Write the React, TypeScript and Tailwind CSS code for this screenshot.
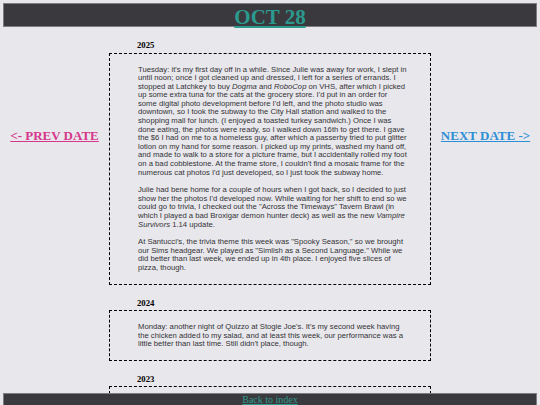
import React from "react"

type Entry = {
  year: string
  body: React.ReactNode[]
}

const entries: Entry[] = [
  {
    year: "2025",
    body: [
      <>
        Tuesday: it's my first day off in a while. Since Julie was away for work, I slept in until
        noon; once I got cleaned up and dressed, I left for a series of errands. I stopped at
        Latchkey to buy <i>Dogma</i> and <i>RoboCop</i> on VHS, after which I picked up some extra
        tuna for the cats at the grocery store. I'd put in an order for some digital photo
        development before I'd left, and the photo studio was downtown, so I took the subway to the
        City Hall station and walked to the shopping mall for lunch. (I enjoyed a toasted turkey
        sandwich.) Once I was done eating, the photos were ready, so I walked down 16th to get
        there. I gave the $6 I had on me to a homeless guy, after which a passerby tried to put
        glitter lotion on my hand for some reason. I picked up my prints, washed my hand off, and
        made to walk to a store for a picture frame, but I accidentally rolled my foot on a bad
        cobblestone. At the frame store, I couldn't find a mosaic frame for the numerous cat photos
        I'd just developed, so I just took the subway home.
      </>,
      <>
        Julie had bene home for a couple of hours when I got back, so I decided to just show her the
        photos I'd developed now. While waiting for her shift to end so we could go to trivia, I
        checked out the "Across the Timeways" Tavern Brawl (in which I played a bad Broxigar demon
        hunter deck) as well as the new <i>Vampire Survivors</i> 1.14 update.
      </>,
      <>
        At Santucci's, the trivia theme this week was "Spooky Season," so we brought our Sims
        headgear. We played as "Simlish as a Second Language." While we did better than last week,
        we ended up in 4th place. I enjoyed five slices of pizza, though.
      </>,
    ],
  },
  {
    year: "2024",
    body: [
      <>
        Monday: another night of Quizzo at Stogie Joe's. It's my second week having the chicken
        added to my salad, and at least this week, our performance was a little better than last
        time. Still didn't place, though.
      </>,
    ],
  },
  {
    year: "2023",
    body: [
      <>
        Saturday: a slow day at home. I caught up on laundry, fed the cats, and spent the evening
        working through the backlog of games I keep meaning to finish.
      </>,
    ],
  },
]

function YearEntry({ entry }: { entry: Entry }) {
  return (
    <section>
      <h3 className="mt-[13px] mb-[2.5px] pl-[28px] text-[8.7px] font-bold leading-[10px] text-black">
        {entry.year}
      </h3>
      <div className="border border-dashed border-black pt-[12px] pb-[11px] pl-[28px] pr-[22.3px] font-['Liberation_Sans',Arial,sans-serif] text-[7.7px] leading-[8.6px] text-[#333336]">
        {entry.body.map((para, i) => (
          <p key={i} className={i > 0 ? "mt-[9px]" : ""}>
            {para}
          </p>
        ))}
      </div>
    </section>
  )
}

export default function App() {
  return (
    <div className="min-h-screen bg-[#e8e7ec] pt-[3px] pb-[24px] font-['Liberation_Serif','Times_New_Roman',serif]">
      <header className="mx-[3px] flex h-[24px] justify-center border border-[#7d7c82] bg-[#3a393e]">
        <a href="#" className="pt-[3px] text-[21px] font-bold leading-[20px] text-[#2b9a8f] underline">
          OCT 28
        </a>
      </header>

      <div className="flex">
        <div className="w-[109px] pt-[102px] text-center text-[13px] font-bold leading-[14px]">
          <a href="#" className="text-[#d6378a] underline">
            &lt;- PREV DATE
          </a>
        </div>

        <main className="w-[322px]">
          {entries.map((entry) => (
            <YearEntry key={entry.year} entry={entry} />
          ))}
        </main>

        <div className="flex-1 pt-[102px] text-center text-[13px] font-bold leading-[14px]">
          <a href="#" className="text-[#2d8fd5] underline">
            NEXT DATE -&gt;
          </a>
        </div>
      </div>

      <footer className="fixed right-[3px] bottom-0 left-[3px] h-[12px] border-x border-t border-[#7d7c82] bg-[#3a393e] text-center text-[10px] leading-[11px]">
        <a href="#" className="text-[#2f9a8b] underline">
          Back to index
        </a>
      </footer>
    </div>
  )
}
